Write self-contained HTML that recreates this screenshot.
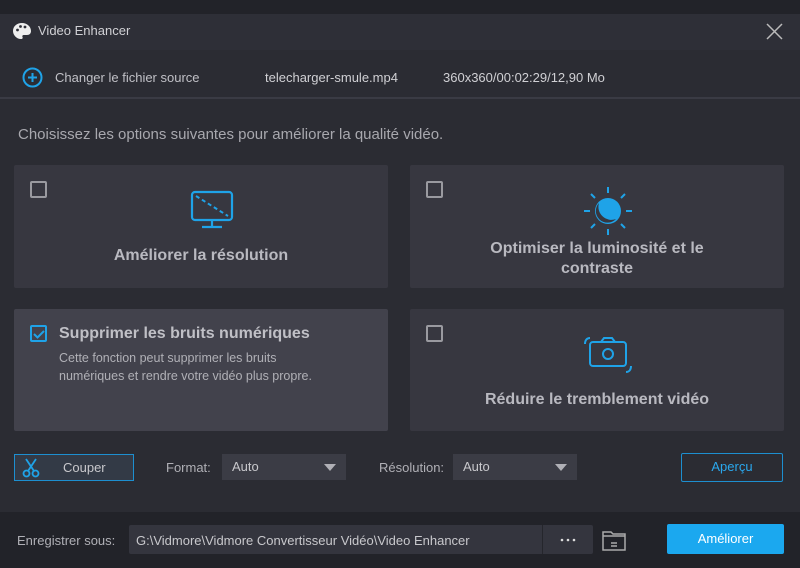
<!DOCTYPE html>
<html><head><meta charset="utf-8"><style>
*{margin:0;padding:0;box-sizing:border-box}
body{width:800px;height:568px;background:#2b2c33;font-family:"Liberation Sans",sans-serif;color:#c8c8cc;position:relative;overflow:hidden;font-size:13px}
.abs{position:absolute}
.card{position:absolute;background:#373740;border-radius:2px}
.cb{position:absolute;width:17px;height:17px;border:2px solid #9a9aa0;border-radius:2px}
.ttl{position:absolute;font-weight:bold;font-size:16px;color:#b9b9c0;text-align:center;line-height:20px}
.sel{position:absolute;background:#24252b;height:26px;color:#c8c8cc;font-size:13px;line-height:26px;padding-left:10px}
.sel:after{content:"";position:absolute;right:10px;top:10px;border-left:6px solid transparent;border-right:6px solid transparent;border-top:7px solid #b0b0b6}
</style></head><body>
<div class="abs" style="left:0;top:0;width:800px;height:14px;background:#222329"></div>
<div class="abs" style="left:0;top:14px;width:800px;height:36px;background:#2e2f37"></div>
<svg class="abs" style="left:12px;top:22px" width="20" height="18" viewBox="0 0 20 18"><path d="M10 1C4.5 1 1 4.5 1 9c0 4 3.5 8 8 8 1.5 0 2-1 1.5-2s0-2 1.5-2h3c2.5 0 4-1.5 4-4C19 4.5 15 1 10 1z" fill="#eee"/><circle cx="5.5" cy="8" r="1.4" fill="#2e2f37"/><circle cx="8.5" cy="4.5" r="1.4" fill="#2e2f37"/><circle cx="13" cy="5" r="1.4" fill="#2e2f37"/></svg>
<div class="abs" style="left:38px;top:23px;font-size:13px;color:#d0d0d4">Video Enhancer</div>
<svg class="abs" style="left:766px;top:23px" width="17" height="17"><path d="M1 1L16 16M16 1L1 16" stroke="#bbb" stroke-width="1.5"/></svg>
<div class="abs" style="left:0;top:97px;width:800px;height:2px;background:#3a3b44"></div>
<svg class="abs" style="left:22px;top:67px" width="21" height="21"><circle cx="10.5" cy="10.5" r="9" fill="none" stroke="#1fa3e8" stroke-width="2"/><path d="M10.5 6v9M6 10.5h9" stroke="#1fa3e8" stroke-width="2"/></svg>
<div class="abs" style="left:55px;top:70px;color:#c0c0c6">Changer le fichier source</div>
<div class="abs" style="left:265px;top:70px;color:#d0d0d4">telecharger-smule.mp4</div>
<div class="abs" style="left:443px;top:70px;color:#d0d0d4">360x360/00:02:29/12,90 Mo</div>
<div class="abs" style="left:18px;top:126px;font-size:15px;color:#a8a8ae">Choisissez les options suivantes pour améliorer la qualité vidéo.</div>

<div class="card" style="left:14px;top:165px;width:374px;height:123px"></div>
<div class="cb" style="left:30px;top:181px"></div>
<svg class="abs" style="left:190px;top:190px" width="45" height="40"><rect x="2" y="2" width="40" height="28" rx="3" fill="none" stroke="#1fa3e8" stroke-width="2.2"/><path d="M6 6L38 26" stroke="#1fa3e8" stroke-width="2" stroke-dasharray="4 3"/><path d="M22 30v6M12 37h20" stroke="#1fa3e8" stroke-width="2.2"/></svg>
<div class="ttl" style="left:14px;top:246px;width:374px">Améliorer la résolution</div>

<div class="card" style="left:410px;top:165px;width:374px;height:123px"></div>
<div class="cb" style="left:426px;top:181px"></div>
<svg class="abs" style="left:583px;top:186px" width="50" height="50"><g stroke="#1fa3e8" stroke-width="2"><path d="M25 1v6M25 43v6M1 25h6M43 25h6M8 8l4 4M38 38l4 4M42 8l-4 4M8 42l4-4"/></g><circle cx="25" cy="25" r="13" fill="#1fa3e8"/><path d="M16 17a13 13 0 0 0 17 16a11 11 0 0 1-17-16z" fill="#373740"/></svg>
<div class="ttl" style="left:472px;top:239px;width:250px">Optimiser la luminosité et le contraste</div>

<div class="card" style="left:14px;top:309px;width:374px;height:122px;background:#42424c"></div>
<div class="cb" style="left:30px;top:325px;border-color:#1fa3e8"></div>
<svg class="abs" style="left:32px;top:327px" width="14" height="14"><path d="M2 7l3.5 3.5L12 4" stroke="#1fa3e8" stroke-width="2" fill="none"/></svg>
<div class="abs" style="left:59px;top:325px;font-weight:bold;font-size:16px;color:#c0c0c6">Supprimer les bruits numériques</div>
<div class="abs" style="left:59px;top:349px;font-size:12.5px;line-height:18px;color:#b0b0b6">Cette fonction peut supprimer les bruits<br>numériques et rendre votre vidéo plus propre.</div>

<div class="card" style="left:410px;top:309px;width:374px;height:122px"></div>
<div class="cb" style="left:426px;top:325px"></div>
<svg class="abs" style="left:583px;top:332px" width="50" height="46"><g fill="none" stroke="#1fa3e8" stroke-width="2"><rect x="7" y="10" width="36" height="24" rx="3"/><circle cx="25" cy="22" r="5"/><path d="M18 10l3-4h8l3 4"/><path d="M2 12c0-4 2-6 5-6M48 34c0 4-2 6-5 6"/></g></svg>
<div class="ttl" style="left:410px;top:390px;width:374px">Réduire le tremblement vidéo</div>

<div class="abs" style="left:14px;top:454px;width:120px;height:27px;border:1.5px solid #1d8fd0;background:#333a46"></div>
<svg class="abs" style="left:22px;top:458px" width="18" height="20"><g fill="none" stroke="#1fa3e8" stroke-width="1.8"><path d="M4 1l8 12M14 1L6 13"/><circle cx="4.5" cy="15.5" r="3"/><circle cx="13.5" cy="15.5" r="3"/></g></svg>
<div class="abs" style="left:63px;top:460px;color:#c8c8cc">Couper</div>
<div class="abs" style="left:166px;top:460px;color:#b0b0b6">Format:</div>
<div class="sel" style="left:222px;top:454px;width:124px;background:#3b3c45">Auto</div>
<div class="abs" style="left:379px;top:460px;color:#b0b0b6">Résolution:</div>
<div class="sel" style="left:453px;top:454px;width:124px;background:#3b3c45">Auto</div>
<div class="abs" style="left:681px;top:453px;width:102px;height:29px;border:1.5px solid #1d8fd0;border-radius:2px;text-align:center;line-height:26px;color:#2aa8ee">Aperçu</div>

<div class="abs" style="left:0;top:512px;width:800px;height:56px;background:#222329"></div>
<div class="abs" style="left:17px;top:533px;color:#b0b0b6">Enregistrer sous:</div>
<div class="abs" style="left:129px;top:525px;width:464px;height:29px;background:#34353e;border-radius:2px"></div>
<div class="abs" style="left:542px;top:525px;width:1px;height:29px;background:#25262c"></div>
<div class="abs" style="left:136px;top:533px;color:#c8c8cc">G:\Vidmore\Vidmore Convertisseur Vidéo\Video Enhancer</div>
<svg class="abs" style="left:560px;top:538px" width="18" height="4"><circle cx="2" cy="2" r="1.3" fill="#ddd"/><circle cx="8" cy="2" r="1.3" fill="#ddd"/><circle cx="14" cy="2" r="1.3" fill="#ddd"/></svg>
<svg class="abs" style="left:601px;top:528px" width="26" height="24"><g fill="none" stroke="#aaa" stroke-width="1.5"><path d="M2 4h8l2 2h12v16H2z"/><path d="M2 8h22M10 15h6M10 18h6"/></g></svg>
<div class="abs" style="left:667px;top:524px;width:117px;height:30px;background:#1ba8ef;border-radius:2px;color:#fff;text-align:center;line-height:30px">Améliorer</div>
</body></html>
